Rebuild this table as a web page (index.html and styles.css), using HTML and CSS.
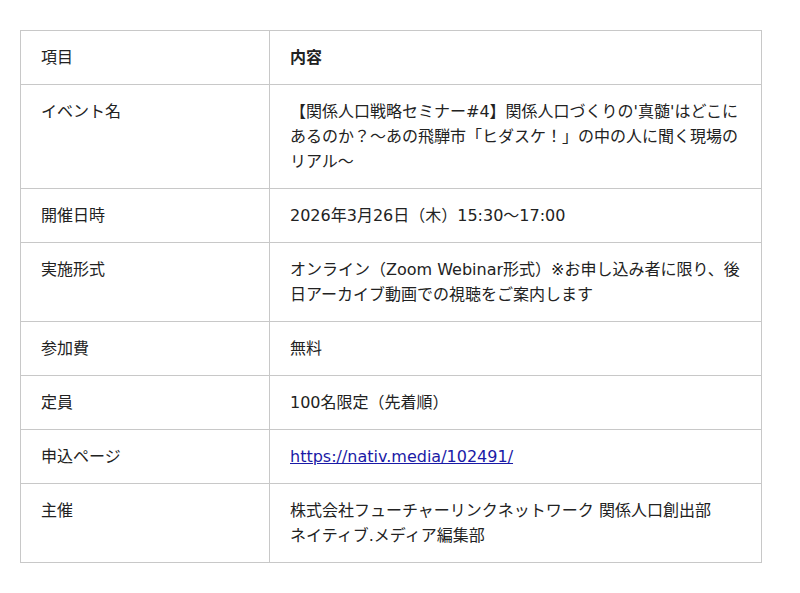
FILE: index.html
```html
<!DOCTYPE html>
<html lang="ja">
<head>
<meta charset="utf-8">
<link rel="stylesheet" href="styles.css">
</head>
<body>
<table class="info">
  <colgroup><col class="c1"><col class="c2"></colgroup>
  <tr><td>項目</td><th>内容</th></tr>
  <tr><td>イベント名</td><td>【関係人口戦略セミナー#4】関係人口づくりの'真髄'はどこにあるのか？〜あの飛騨市「ヒダスケ！」の中の人に聞く現場のリアル〜</td></tr>
  <tr><td>開催日時</td><td>2026年3月26日（木）15:30〜17:00</td></tr>
  <tr><td>実施形式</td><td>オンライン（Zoom Webinar形式）※お申し込み者に限り、後日アーカイブ動画での視聴をご案内します</td></tr>
  <tr><td>参加費</td><td>無料</td></tr>
  <tr><td>定員</td><td>100名限定（先着順）</td></tr>
  <tr><td>申込ページ</td><td><a class="link" href="#">https://nativ.media/102491/</a></td></tr>
  <tr><td>主催</td><td>株式会社フューチャーリンクネットワーク 関係人口創出部<br>ネイティブ.メディア編集部</td></tr>
</table>
</body>
</html>
```

FILE: styles.css
```css
html, body {
  margin: 0;
  background: #fff;
}
body {
  padding: 30px 20px;
  font-family: "DejaVu Sans", "Noto Sans CJK JP", sans-serif;
  font-size: 16px;
  line-height: 25px;
  color: #222;
}
.info {
  width: 742px;
  border-collapse: collapse;
  border: 1px solid #d6d6d6;
  table-layout: fixed;
}
.c1 { width: 249px; }
.info td, .info th {
  border: 1px solid #c8c8c8;
  padding: 14px 20px;
  text-align: left;
  vertical-align: top;
  font-weight: normal;
}
.info th {
  font-weight: bold;
}
.link {
  color: #1a1aa6;
  text-decoration: underline;
}
```
